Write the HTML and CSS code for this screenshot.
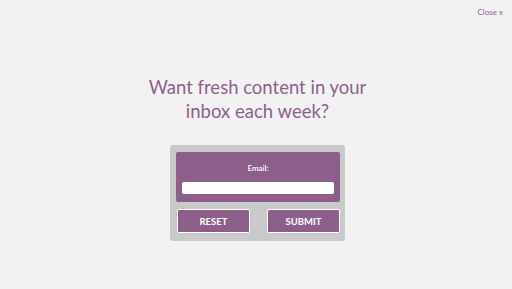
FILE: index.html
```html
<!DOCTYPE html>
<html>
<head>
<meta charset="utf-8">
<link rel="stylesheet" href="styles.css">
</head>
<body>
<div class="page">
  <div class="topbar"><a class="close">Close x</a></div>
  <h1 class="title">Want fresh content in your<br>inbox each week?</h1>
  <form class="card">
    <div class="panel">
      <label class="label">Email:</label>
      <div class="input"></div>
    </div>
    <div class="actions">
      <button type="button" class="btn">RESET</button>
      <button type="button" class="btn">SUBMIT</button>
    </div>
  </form>
</div>
</body>
</html>
```
FILE: styles.css
```css
html, body {
  margin: 0;
  padding: 0;
  background: #f2f2f2;
}
.page {
  width: 512px;
  height: 289px;
  box-sizing: border-box;
  padding-left: 3px;
  display: flex;
  flex-direction: column;
  align-items: center;
  font-family: Lato, "Open Sans", sans-serif;
}
.topbar {
  align-self: stretch;
  display: flex;
  justify-content: flex-end;
  padding: 7px 9px 0 0;
  height: 13px;
}
.close {
  font-size: 8px;
  line-height: 10px;
  color: #8c5f8b;
}
.title {
  margin: 55px 0 0 0;
  font-size: 18.5px;
  line-height: 24px;
  font-weight: 400;
  color: #8c5f8b;
  text-align: center;
}
.card {
  margin-top: 22px;
  width: 175px;
  box-sizing: border-box;
  background: #c9c9c9;
  border-radius: 3px;
  padding: 7px 5px 8px 6px;
}
.panel {
  background: #8c5f8b;
  border-radius: 2px;
  height: 50px;
  box-sizing: border-box;
  padding: 10px 6px 0 6px;
  display: flex;
  flex-direction: column;
  align-items: center;
}
.label {
  color: #fff;
  font-size: 8px;
  line-height: 12px;
  font-weight: 600;
}
.input {
  margin-top: 8px;
  align-self: stretch;
  height: 12px;
  background: #fff;
  border-radius: 2px;
}
.actions {
  margin-top: 7px;
  display: flex;
  justify-content: space-between;
  padding: 0 0 0 1px;
}
.btn {
  width: 73px;
  height: 24px;
  box-sizing: border-box;
  background: #8c5f8b;
  border: 1.5px solid #fff;
  border-radius: 2px;
  color: #fff;
  font-family: Lato, sans-serif;
  font-size: 9.5px;
  font-weight: 700;
  padding: 0;
}
```
